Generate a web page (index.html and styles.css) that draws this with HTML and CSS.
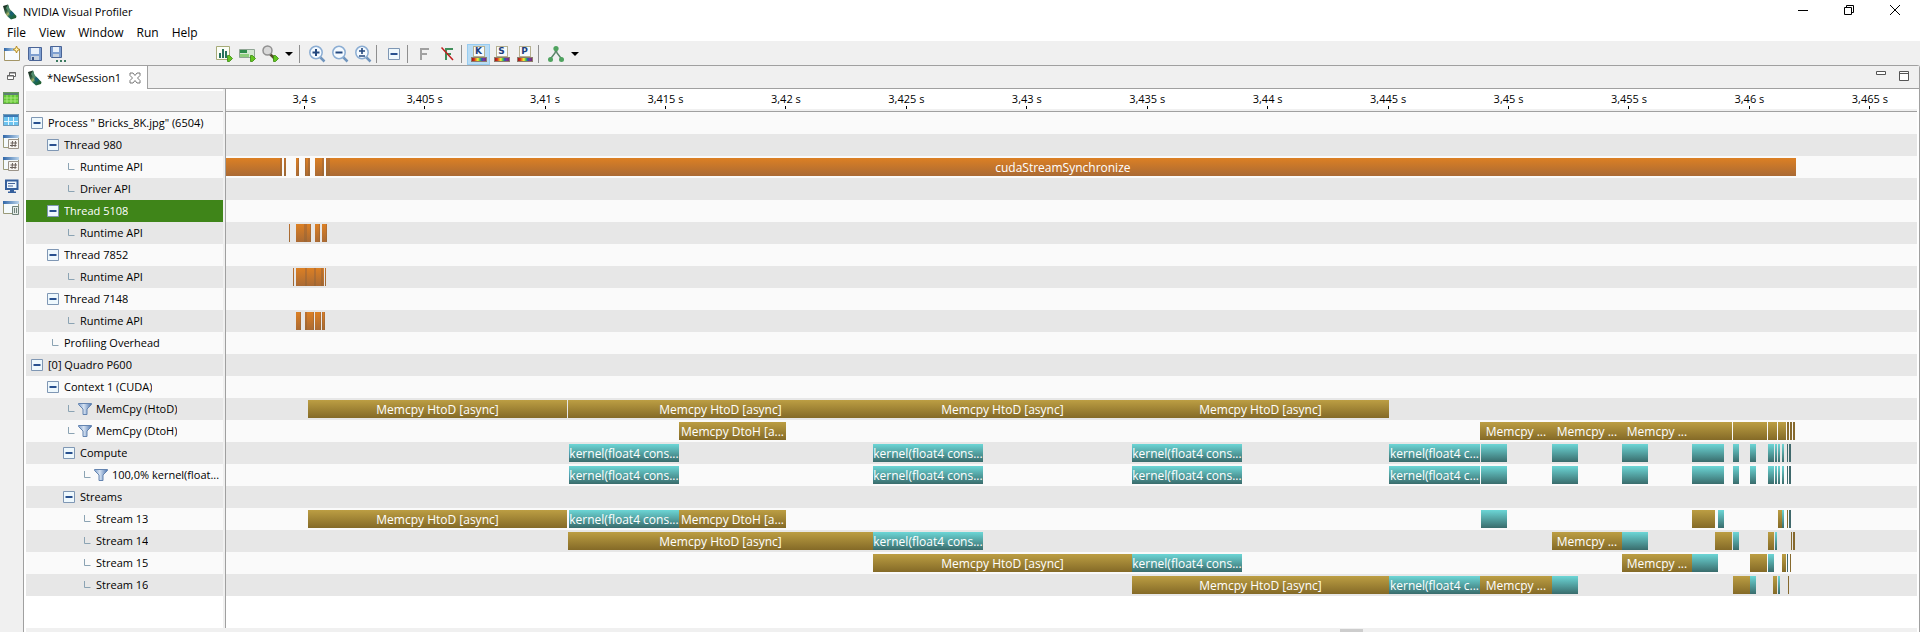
FILE: index.html
```html
<!DOCTYPE html>
<html lang="en">
<head>
<meta charset="utf-8">
<title>NVIDIA Visual Profiler</title>
<link rel="stylesheet" href="styles.css">
</head>
<body>
<svg class="defs" aria-hidden="true">
  <defs>
    <linearGradient id="g-logo" x1="0" y1="0" x2="1" y2="1">
      <stop offset="0" stop-color="#101c14"/><stop offset=".35" stop-color="#2f5c40"/><stop offset=".5" stop-color="#a7b56a"/><stop offset=".62" stop-color="#1c6a5c"/><stop offset="1" stop-color="#245c20"/>
    </linearGradient>
    <linearGradient id="g-funnel" x1="0" x2="1"><stop offset="0" stop-color="#7f9fcb"/><stop offset=".4" stop-color="#d5e2f2"/><stop offset="1" stop-color="#4d74ad"/></linearGradient>
    <linearGradient id="g-bar" x1="0" x2="1"><stop offset="0" stop-color="#2f66a8"/><stop offset="1" stop-color="#b9d3ea"/></linearGradient>
    <symbol id="i-logo" viewBox="0 0 16 16"><path d="M1 2 6 .5 7.500 5 12 9.500 14.500 12 14 14 9 15.500 5 12 3 9z" fill="url(#g-logo)"/><path d="M6 .5 7.500 5 9 6.500 7 9 4 4z" fill="#4f8a6c"/><path d="M7 9 9 6.500 12 9.500 10 12z" fill="#196070"/></symbol>
    <symbol id="i-play" viewBox="0 0 6 7"><path d="M.5.5h2L5.500 3.500 2.500 6.500h-2z" fill="#62c520" stroke="#38890c" stroke-width=".8"/></symbol>
    <symbol id="i-funnel" viewBox="0 0 14 12"><path d="M.5.5h13v1L9 6v5.500H5V6L.5 1.500z" fill="url(#g-funnel)" stroke="#6484b0"/></symbol>
    <symbol id="i-leaf" viewBox="0 0 12 12"><path d="M5.500 2v6.500h6" fill="none" stroke="#8ba3b3"/></symbol>
    <symbol id="i-minus" viewBox="0 0 12 12"><path d="M.5.5h11v11H.5z" fill="#eef8fd" stroke="#7f97b4"/><path d="M2.500 6h7" stroke="#28508f" stroke-width="2"/></symbol>
    <symbol id="i-lens" viewBox="0 0 18 18"><path d="m12 12 4.500 4.500" stroke="#7195bd" stroke-width="2.500"/><circle cx="8" cy="7.500" r="6.200" fill="#f4faff" stroke="#8badd3" stroke-width="1.500"/></symbol>
    <symbol id="i-win" viewBox="0 0 16 14"><path d="M.5 1.500h15v11H.5z" fill="#f4fafc" stroke="#9a9a78"/><path d="M0 0h16v3H0z" fill="url(#g-bar)"/></symbol>
  </defs>
</svg>

<header class="titlebar">
  <svg class="icon16"><use href="#i-logo"/></svg>
  <h1 class="title">NVIDIA Visual Profiler</h1>
  <div class="window-buttons">
    <button class="winbtn" aria-label="Minimize"><svg viewBox="0 0 12 12"><path d="M1 6.500h10" stroke="#000" fill="none"/></svg></button>
    <button class="winbtn" aria-label="Restore"><svg viewBox="0 0 12 12"><path d="M1.500 3.500h7v7h-7zM3.500 3.500v-2h7v7h-2" stroke="#000" fill="none"/></svg></button>
    <button class="winbtn" aria-label="Close"><svg viewBox="0 0 12 12"><path d="m1 1 10 10M11 1 1 11" stroke="#000" fill="none"/></svg></button>
  </div>
</header>
<nav class="menubar">
  <button class="menu">File</button><button class="menu">View</button><button class="menu">Window</button><button class="menu">Run</button><button class="menu">Help</button>
</nav>

<div class="toolbar" role="toolbar" aria-label="Main">
  <div class="tools tools-file">
    <button class="tool" aria-label="New session"><svg class="icon18" viewBox="0 0 18 18"><path d="M1.500 4.500h15v11h-15z" fill="#f7fbff" stroke="#a39566"/><path d="M1 3h11v3H1z" fill="url(#g-bar)"/><path d="m13.500 1 1 2.500L17 4.500l-2.500 1-1 2.500-1-2.500-2.500-1 2.500-1z" fill="#fff3b0" stroke="#b98b1e"/></svg></button>
    <button class="tool" aria-label="Save"><svg class="icon18" viewBox="0 0 18 18"><path d="M2.500 2.500h13v13h-12l-1-1z" fill="#7f9fd0" stroke="#4a6496"/><path d="M5 3h8v6H5z" fill="#eaf1fa"/><path d="M5 11h8v4H5z" fill="#c7d2e0"/><path d="M6 12h2v3H6z" fill="#3c5484"/></svg></button>
    <button class="tool" aria-label="Save as"><svg class="icon18" viewBox="0 0 18 18"><path d="M1.500 1.500h11v11h-10l-1-1z" fill="#7f9fd0" stroke="#4a6496"/><path d="M4 2h6v5H4z" fill="#eaf1fa"/><path d="M4 9h6v3H4z" fill="#c7d2e0"/><path d="M7 15h2v2H7zM11 15h2v2h-2zM15 15h2v2h-2z" fill="#3c7a60"/></svg></button>
  </div>
  <div class="tools">
    <button class="tool" aria-label="Analyze"><svg class="icon18" viewBox="0 0 18 18"><path d="M1.500 1.500h13v13h-13z" fill="#fbfdf6" stroke="#a7ab78"/><path d="M4 8h2v5H4zM7 4h2v9H7zM10 6h2v7h-2z" fill="#28735c"/><use href="#i-play" x="12" y="10" width="6" height="7"/></svg></button>
    <button class="tool" aria-label="Run"><svg class="icon18" viewBox="0 0 18 18"><path d="M1.500 4.500h15v8h-15z" fill="#d5e8d3" stroke="#8fa593"/><path d="M2 5h7v3H2z" fill="#2f8c4c"/><path d="M2 9h9v3H2z" fill="#8fcf7f"/><use href="#i-play" x="12" y="10" width="6" height="7"/></svg></button>
    <button class="tool" aria-label="Profile"><svg class="icon18" viewBox="0 0 18 18"><path d="m9 9 5 5" stroke="#554d2c" stroke-width="2.500"/><circle cx="6.500" cy="5.500" r="4.500" fill="#d9d9d9" stroke="#909090" stroke-width="1.500"/><use href="#i-play" x="12" y="10" width="6" height="7"/></svg></button>
    <button class="tool-arrow" aria-label="Profile options"><svg viewBox="0 0 8 4"><path d="M0 0h8L4 4z"/></svg></button>
  </div>
  <span class="sep"></span>
  <div class="tools">
    <button class="tool" aria-label="Zoom in"><svg class="icon18" viewBox="0 0 18 18"><use href="#i-lens"/><path d="M4.500 7.500h7M8 4v7" stroke="#24487e" stroke-width="2"/></svg></button>
    <button class="tool" aria-label="Zoom out"><svg class="icon18" viewBox="0 0 18 18"><use href="#i-lens"/><path d="M4.500 7.500h7" stroke="#24487e" stroke-width="2"/></svg></button>
    <button class="tool" aria-label="Zoom to fit"><svg class="icon18" viewBox="0 0 18 18"><use href="#i-lens"/><path d="M5 6h6M8 3v6M5 11h6" stroke="#24487e" stroke-width="1.600"/></svg></button>
  </div>
  <span class="sep"></span>
  <div class="tools">
    <button class="tool" aria-label="Collapse"><svg class="icon12"><use href="#i-minus"/></svg></button>
  </div>
  <span class="sep"></span>
  <div class="tools">
    <button class="tool" aria-label="Filter"><svg class="icon18" viewBox="0 0 18 18"><path d="M5 15V4H13M5 9H11" fill="none" stroke="#a0a0a0" stroke-width="2"/></svg></button>
    <button class="tool" aria-label="Clear filter"><svg class="icon18" viewBox="0 0 18 18"><path d="M7 15V4H14M7 9H12" fill="none" stroke="#3f8f5a" stroke-width="2"/><path d="M2.500 2.500 14 15" stroke="#c02020" stroke-width="1.500"/></svg></button>
  </div>
  <span class="sep"></span>
  <div class="tools">
    <button class="tool is-on" aria-label="Color by kernel" aria-pressed="true"><span class="letter">K</span><span class="rainbow"></span></button>
    <button class="tool" aria-label="Color by stream"><span class="letter">S</span><span class="rainbow"></span></button>
    <button class="tool" aria-label="Color by process"><span class="letter">P</span><span class="rainbow"></span></button>
  </div>
  <span class="sep"></span>
  <div class="tools">
    <button class="tool" aria-label="Dependencies"><svg class="icon18" viewBox="0 0 18 18"><path d="M9 4.500 8 8l-5 6.500M9 4.500 10 8l5 6.500" fill="none" stroke="#5a8468" stroke-width="1.500"/><circle cx="9" cy="3.500" r="2.600" fill="#4fa35f"/><circle cx="3.500" cy="14.500" r="2.500" fill="#4fa35f"/><circle cx="14.500" cy="14.500" r="2.500" fill="#4fa35f"/></svg></button>
    <button class="tool-arrow" aria-label="Dependency options"><svg viewBox="0 0 8 4"><path d="M0 0h8L4 4z"/></svg></button>
  </div>
</div>

<main class="workbench">
  <aside class="rail">
    <button class="rail-btn" aria-label="Restore"><svg viewBox="0 0 16 14"><path d="M6.500 6V3.500h6v4H11M4.500 6.500h6v4h-6z" fill="#fff" stroke="#666"/><path d="M6 4h7M4 7h7" stroke="#666"/></svg></button>
    <button class="rail-btn" aria-label="Analysis"><svg viewBox="0 0 16 14"><path d="M0 1h16v12H0z" fill="#62c832"/><path d="M0 1h16v3H0z" fill="#5b7f74"/><path d="M0 7h16M0 10h16M4 4v9M8 4v9M12 4v9" stroke="#b5ec8c" stroke-width=".8"/><path d="M.5 1.500h15v11H.5z" fill="none" stroke="#69995a"/></svg></button>
    <button class="rail-btn" aria-label="GPU details"><svg viewBox="0 0 16 14"><path d="M0 1h16v12H0z" fill="#6cc4f0"/><path d="M0 1h16v3H0z" fill="#3b78b4"/><path d="M0 8.500h16M5.500 4v9M10.500 4v9" stroke="#e5f7ff"/><path d="M.5 1.500h15v11H.5z" fill="none" stroke="#7199b5"/></svg></button>
    <button class="rail-btn" aria-label="CPU details"><svg viewBox="0 0 16 14"><use href="#i-win"/><path d="M5.500 4.500h10v9h-10z" fill="#f8f6f2" stroke="#9b9388"/><path d="M9.500 6 9 12M12.500 6 12 12M7.500 8h6.500M7 10.500h6.500" stroke="#6c625c"/></svg></button>
    <button class="rail-btn" aria-label="OpenACC details"><svg viewBox="0 0 16 14"><use href="#i-win"/><path d="M5.500 4.500h10v9h-10z" fill="#f8f6f2" stroke="#9b9388"/><path d="M9.500 6 9 12M12.500 6 12 12M7.500 8h6.500M7 10.500h6.500" stroke="#6c625c"/></svg></button>
    <button class="rail-btn" aria-label="Console"><svg viewBox="0 0 16 14"><path d="M3 1.500h11.500v8.500H3z" fill="#eef6fd" stroke="#355f9c" stroke-width="2"/><path d="M5 4.500h7M5 7h5" stroke="#44649a"/><path d="M7 11h4v1.500h2V14H5v-1.500h2z" fill="#355f9c"/></svg></button>
    <button class="rail-btn" aria-label="Settings"><svg viewBox="0 0 16 14"><use href="#i-win"/><path d="M9.500 5.500h6v8h-6z" fill="#e5ece8" stroke="#70827a"/><path d="M11.500 7v5M13.500 7v5" stroke="#70827a"/></svg></button>
  </aside>

  <section class="folder">
    <div class="tabstrip">
      <div class="tab"><svg class="icon16"><use href="#i-logo"/></svg><span>*NewSession1</span>
        <button class="tab-close" aria-label="Close tab"><svg viewBox="0 0 12 12"><path d="M1 1h3l2 2.500L8 1h3v2.500L8.500 6 11 8.500V11H8L6 8.500 4 11H1V8.500L3.500 6 1 3.500z" fill="#fff" stroke="#777"/></svg></button>
      </div>
      <div class="tab-rest">
        <button class="view-btn" aria-label="Minimize view"><svg viewBox="0 0 10 10"><path d="M.5.5h9v3h-9z" fill="#fff" stroke="#555"/></svg></button>
        <button class="view-btn" aria-label="Maximize view"><svg viewBox="0 0 10 10"><path d="M.5.5h9v9h-9zM0 2.500h10" fill="#fff" stroke="#555"/></svg></button>
      </div>
    </div>
    <div class="panes">
      <div class="tree">
        <div class="tree-head"></div>
        <div id="labels" role="tree"></div>
      </div>
      <div class="timeline">
        <div class="ruler" id="ruler"></div>
        <div id="tracks"></div>
      </div>
    </div>
    <div class="hscroll"><div class="thumb"></div></div>
  </section>
</main>
<script src="timeline.js"></script>
</body>
</html>
```
FILE: styles.css
```css
* { box-sizing: border-box; }

body {
  margin: 0;
  min-height: 100vh;
  display: flex;
  flex-direction: column;
  background: #f0f0f0;
  color: #000;
  font: 12px/16px "Open Sans", "Noto Sans", sans-serif;
}

button {
  display: flex;
  align-items: center;
  justify-content: center;
  margin: 0;
  padding: 0;
  border: 0;
  background: none;
  color: inherit;
  font: inherit;
}

svg { display: block; flex: none; }
.defs { position: absolute; width: 0; height: 0; }
.icon12 { width: 12px; height: 12px; }
.icon16 { width: 16px; height: 16px; }
.icon18 { width: 18px; height: 18px; }

.titlebar {
  display: flex;
  align-items: center;
  height: 24px;
  padding: 0 2px;
  gap: 5px;
  background: #fff;
}
.title { margin: 0; font-size: 11px; font-weight: 400; line-height: 16px; }
.window-buttons { display: flex; margin-left: auto; }
.winbtn { width: 46px; height: 24px; padding-bottom: 4px; }
.winbtn svg { width: 12px; height: 12px; }

.menubar { display: flex; height: 17px; padding-left: 7px; gap: 13px; background: #fff; }
.menu { height: 17px; }

.toolbar { display: flex; align-items: center; height: 24px; padding-top: 2px; }
.tools { display: flex; align-items: center; }
.tools-file { margin-right: 143px; }
.tool { flex-direction: column; width: 23px; height: 21px; }
.tool.is-on { background: #b9dcf4; border: 1px solid #98ccf0; }
.tool-arrow { width: 16px; height: 21px; }
.tool-arrow svg { width: 8px; height: 4px; }
.sep { width: 1px; height: 18px; margin: 0 5px 0 2px; background: #8f8f8f; }
.letter {
  width: 12px;
  height: 11px;
  border: 1px solid #b5b090;
  background: #f6fafc;
  color: #1f3f7c;
  font: bold 9px/9px "DejaVu Sans", sans-serif;
  text-align: center;
}
.rainbow {
  width: 16px;
  height: 5px;
  border: 1px solid #8d7c6c;
  background: linear-gradient(90deg, #a01818, #d03020 16%, #f0a020 30%, #f4f040 42%, #40c850 56%, #2858b8 70%, #8030a0 84%, #703070);
}

.workbench { flex: 1; display: flex; }
.rail { width: 23px; padding: 0 1px 0 3px; }
.rail-btn { width: 16px; height: 22px; }
.rail-btn svg { width: 16px; height: 14px; }

.folder {
  flex: 1;
  min-width: 0;
  display: flex;
  flex-direction: column;
  border: 1px solid #a0a0a0;
  border-bottom: 0;
  border-radius: 3px 3px 0 0;
  background: #fff;
}
.tabstrip { display: flex; height: 23px; }
.tab { display: flex; align-items: center; padding: 0 6px 0 3px; gap: 4px; font-size: 11px; }
.tab-close { margin-left: 4px; }
.tab-close svg { width: 12px; height: 12px; }
.tab-rest {
  flex: 1;
  display: flex;
  justify-content: flex-end;
  gap: 13px;
  padding: 5px 10px 0 0;
  border-left: 1px solid #a0a0a0;
  border-bottom: 1px solid #a0a0a0;
  background: #f0f0f0;
}
.view-btn { width: 10px; height: 10px; }
.view-btn svg { width: 10px; height: 10px; }

.panes { flex: 1; display: flex; padding: 0 2px; }
.tree { width: 199px; border-right: 2px solid #f0f0f0; font-size: 11px; }
.tree-head { height: 23px; border-top: 2px solid #fff; border-bottom: 1px solid #a0a0a0; background: #f0f0f0; }
.row { display: flex; align-items: center; height: 22px; background: #fafafa; }
.row:nth-child(even) { background: #e7e7e7; }
.row.is-selected { background: #3f8519; color: #fff; }
.label { padding-left: 5px; gap: 5px; white-space: nowrap; }
.label span { overflow: hidden; text-overflow: ellipsis; }
.label .funnel { width: 14px; height: 12px; margin: 0 -1px 0 -2px; }
.level-1 { padding-left: 21px; }
.level-2 { padding-left: 37px; }
.level-3 { padding-left: 53px; }

.timeline { flex: 1; min-width: 0; border-left: 1px solid #a0a0a0; }
.ruler {
  display: flex;
  height: 23px;
  overflow: hidden;
  border-bottom: 1px solid #a0a0a0;
  box-shadow: inset 0 -2px #f0f0f0;
}
.mark {
  flex: none;
  width: 7.123%;
  height: 20px;
  padding-top: 2px;
  display: flex;
  flex-direction: column;
  align-items: center;
  font-size: 11px;
  line-height: 15px;
}
.mark:first-child { margin-left: 1.06%; }
.mark::after { content: ""; width: 1px; height: 3px; background: #000; }
.bar {
  flex: none;
  height: 18px;
  overflow: hidden;
  color: #fff;
  font-size: 12px;
  line-height: 19px;
  text-align: center;
  white-space: nowrap;
}
.api { background: linear-gradient(#dc8024, #aa6a34); }
.call { background: linear-gradient(#bb7130, #9c6734); }
.copy { background: linear-gradient(#bc9e43, #846a27); }
.copy-end { background: #86692d; }
.kernel { background: linear-gradient(#6cd6d6, #396c6c); }
.kernel-end { background: #40696c; }

.hscroll { height: 4px; margin: 0 2px; padding: 1px 0 0; background: #f0f0f0; }
.thumb { width: 23px; height: 3px; margin-left: 69.500%; background: #cdcdcd; }
```
FILE: timeline.js
```javascript
// Visible range of the timeline, in ticks.
const START = 226;
const SPAN = 1691;

const H = "Memcpy HtoD [async]";
const D = "Memcpy DtoH [a...";
const K = "kernel(float4 cons...";
const K2 = "kernel(float4 c...";
const M = "Memcpy ...";

const compute = [
  ["kernel", 569, 679, K], ["kernel", 873, 983, K], ["kernel", 1132, 1242, K],
  ["kernel", 1389, 1480, K2], ["kernel", 1481, 1507], ["kernel", 1552, 1578],
  ["kernel", 1622, 1648], ["kernel", 1692, 1724], ["kernel", 1733, 1739],
  ["kernel", 1750, 1756], ["kernel", 1768, 1774], ["kernel", 1775, 1777],
  ["kernel", 1778, 1780], ["kernel", 1782, 1784], ["kernel-end", 1787, 1788],
  ["kernel-end", 1789, 1791]
];

// level, kind (group, leaf, filter), label, bars
const rows = [
  [0, "group", 'Process " Bricks_8K.jpg" (6504)', []],
  [1, "group", "Thread 980", []],
  [2, "leaf", "Runtime API", [
    ["api", 226, 280], ["call", 280, 282], ["call", 284, 286], ["api", 296, 298], ["call", 298, 299],
    ["call", 305, 306], ["api", 306, 308], ["call", 308, 310], ["api", 315, 322], ["call", 322, 324],
    ["call", 326, 330], ["api", 330, 1796, "cudaStreamSynchronize"]]],
  [2, "leaf", "Driver API", []],
  [1, "group", "Thread 5108", [], true],
  [2, "leaf", "Runtime API", [
    ["call", 289, 290], ["api", 296, 304], ["call", 304, 307], ["api", 307, 310], ["call", 310, 311],
    ["api", 315, 319], ["call", 319, 320], ["api", 322, 326], ["call", 326, 327]]],
  [1, "group", "Thread 7852", []],
  [2, "leaf", "Runtime API", [
    ["call", 293, 294], ["api", 296, 305], ["call", 305, 307], ["api", 307, 314], ["call", 314, 316],
    ["api", 316, 321], ["call", 321, 323], ["api", 323, 324], ["call", 325, 326]]],
  [1, "group", "Thread 7148", []],
  [2, "leaf", "Runtime API", [
    ["api", 296, 300], ["call", 300, 301], ["call", 305, 307], ["api", 307, 313], ["call", 313, 314],
    ["api", 315, 320], ["call", 320, 321], ["call", 322, 323], ["api", 323, 324], ["call", 324, 325]]],
  [1, "leaf", "Profiling Overhead", []],
  [0, "group", "[0] Quadro P600", []],
  [1, "group", "Context 1 (CUDA)", []],
  [2, "filter", "MemCpy (HtoD)", [
    ["copy", 308, 567, H], ["copy", 568, 873, H], ["copy", 873, 1132, H], ["copy", 1132, 1389, H]]],
  [2, "filter", "MemCpy (DtoH)", [
    ["copy", 679, 786, D], ["copy", 1480, 1552, M], ["copy", 1552, 1622, M], ["copy", 1622, 1692, M],
    ["copy", 1692, 1732], ["copy", 1733, 1767], ["copy", 1768, 1777], ["copy", 1778, 1786],
    ["copy-end", 1787, 1789], ["copy-end", 1790, 1792], ["copy-end", 1793, 1795]]],
  [2, "group", "Compute", compute],
  [3, "filter", "100,0% kernel(float...", compute],
  [2, "group", "Streams", []],
  [3, "leaf", "Stream 13", [
    ["copy", 308, 567, H], ["kernel", 569, 679, K], ["copy", 679, 786, D], ["kernel", 1481, 1507],
    ["copy", 1692, 1715], ["kernel", 1718, 1724], ["copy", 1778, 1782], ["kernel", 1782, 1784],
    ["copy-end", 1787, 1788], ["kernel-end", 1789, 1791]]],
  [3, "leaf", "Stream 14", [
    ["copy", 568, 873, H], ["kernel", 873, 983, K], ["copy", 1552, 1622, M], ["kernel", 1622, 1648],
    ["copy", 1715, 1732], ["kernel", 1733, 1739], ["copy", 1768, 1774], ["kernel", 1775, 1777],
    ["copy-end", 1791, 1792], ["copy-end", 1793, 1795]]],
  [3, "leaf", "Stream 15", [
    ["copy", 873, 1132, H], ["kernel", 1132, 1242, K], ["copy", 1622, 1692, M], ["kernel", 1692, 1718],
    ["copy", 1750, 1767], ["kernel", 1768, 1774], ["copy", 1782, 1786], ["kernel-end", 1787, 1788],
    ["copy-end", 1790, 1791]]],
  [3, "leaf", "Stream 16", [
    ["copy", 1132, 1389, H], ["kernel", 1389, 1480, K2], ["copy", 1480, 1552, M], ["kernel", 1552, 1578],
    ["copy", 1733, 1750], ["kernel", 1750, 1756], ["copy", 1773, 1777], ["kernel", 1778, 1780],
    ["copy-end", 1788, 1789]]]
];

const percent = (n) => (n / SPAN * 100).toFixed(5) + "%";
const icon = (name, cls) => `<svg class="${cls}"><use href="#i-${name}"/></svg>`;

const marker = (kind) => kind === "group"
  ? `<button aria-label="Collapse">${icon("minus", "icon12")}</button>`
  : icon("leaf", "icon12") + (kind === "filter" ? icon("funnel", "funnel") : "");

const bars = (list) => {
  let at = START;
  return list.map(([type, from, to, text = ""]) => {
    const gap = from - at;
    at = to;
    return `<div class="bar ${type}" style="margin-left:${percent(gap)};width:${percent(to - from)}">${text}</div>`;
  }).join("");
};

document.getElementById("labels").innerHTML = rows.map(([level, kind, text, , selected]) =>
  `<div class="row label level-${level}${selected ? " is-selected" : ""}" role="treeitem">${marker(kind)}<span>${text}</span></div>`
).join("");

document.getElementById("tracks").innerHTML = rows.map((row) => `<div class="row">${bars(row[3])}</div>`).join("");

document.getElementById("ruler").innerHTML = [
  "3,4", "3,405", "3,41", "3,415", "3,42", "3,425", "3,43", "3,435", "3,44", "3,445", "3,45", "3,455", "3,46", "3,465"
].map((t) => `<div class="mark">${t} s</div>`).join("");
```
